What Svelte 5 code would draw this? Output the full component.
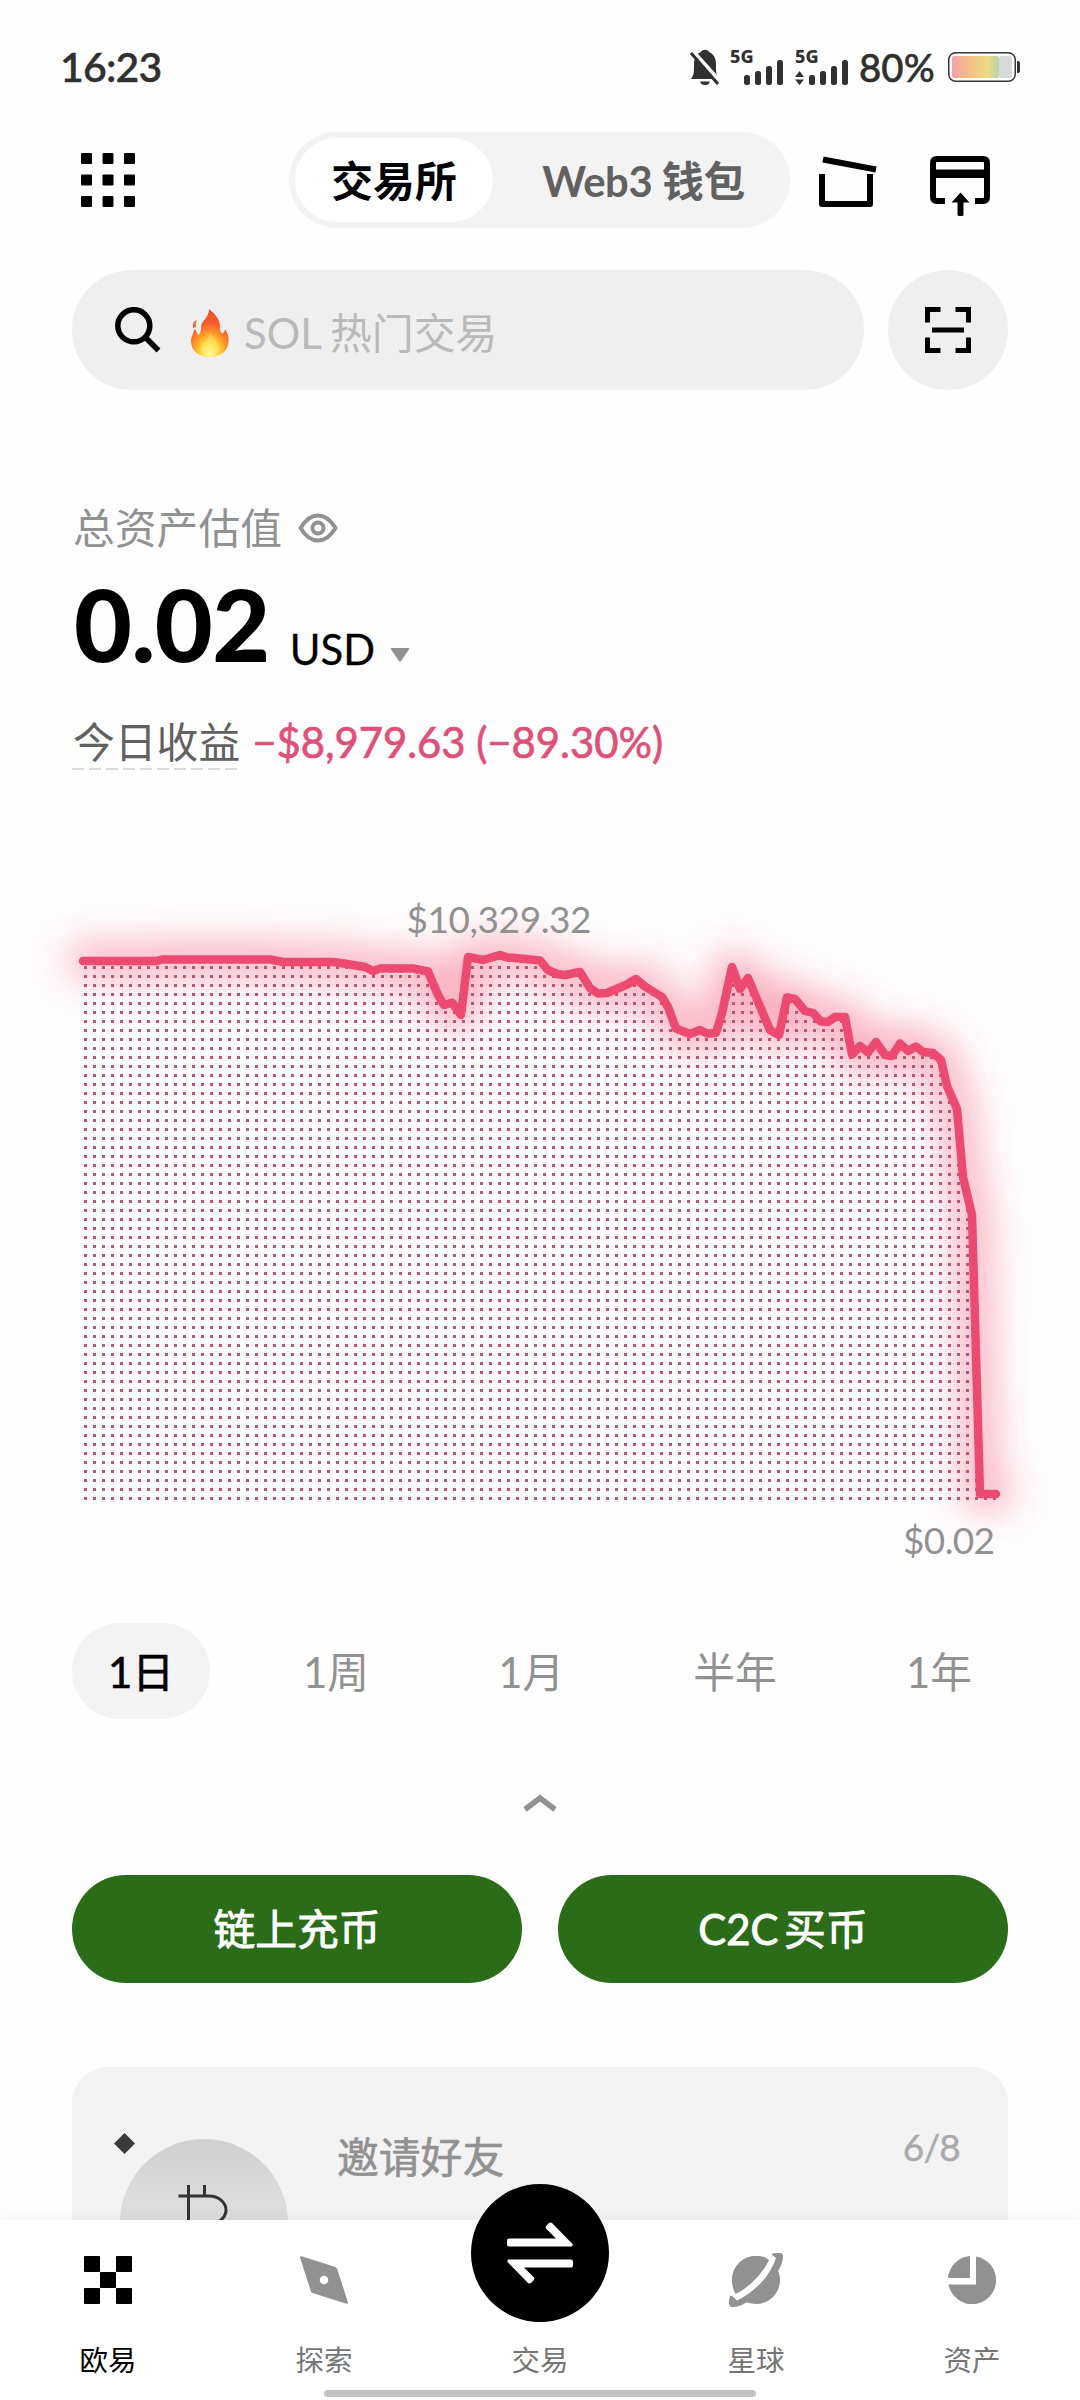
<script>
  const ranges = ['1日', '1周', '1月', '半年', '1年'];
  let activeRange = $state('1日');

  // Balance curve, in the chart's own coordinates
  const points = [
    [83, 81], [157, 81], [162, 79.5], [270, 79.5], [283, 82], [333, 82], [347, 84], [365, 87],
    [373, 91], [380, 88.5], [413, 88.5], [428, 91.5], [438, 115], [444, 125], [452, 122.5],
    [461, 135], [468, 77], [483, 80], [500, 75], [507, 77.5], [515, 78], [540, 80.5], [548, 90], [557, 94],
    [565, 95], [580, 92], [590, 108], [598, 113.5], [607, 113], [627, 104.5], [636, 99],
    [645, 106.5], [662, 117], [668, 127], [676, 148.5], [690, 154], [700, 150], [707, 153.5],
    [716, 153], [722, 133], [732, 87], [740, 109], [748, 98], [770, 150], [779, 155], [787, 117.5],
    [795, 119], [805, 131], [813, 133], [821, 141.5], [828, 142], [835, 137], [845, 137],
    [852, 174.5], [860, 166], [868, 172.5], [876, 162], [885, 175], [892, 176], [900, 163.5],
    [908, 171], [916, 166.5], [923, 172], [933, 173], [941, 180], [947, 206], [957, 229],
    [963, 297], [972, 335], [980, 614], [996, 614]
  ];
  const line = 'M' + points.map((p) => p.join(' ')).join('L');
  const area = line + 'V621H83Z';
</script>

<div class="screen">
  <main>
    <div class="status">
      <span class="clock">16:23</span>
      <div class="indicators">
        <svg class="bell" width="32" height="38" viewBox="0 0 32 38">
          <path d="M2 31C5 27 5 24 5 17C5 8 9 5 12 4C13 1 19 1 20 4C24 6 27 9 27 16C27 24 27 27 30 31Z M11 33.5H21Q20 37 16 37Q12 37 11 33.5Z" fill="#303030" />
          <path d="M3 3L31 34" stroke="#fff" stroke-width="5" />
          <path d="M2 5L29 36" stroke="#303030" stroke-width="3" />
        </svg>
        <div class="cell">
          <span>5G</span>
          <svg width="54" height="36" viewBox="0 0 54 36" fill="#303030">
            <rect x="14" y="26" width="6" height="10" rx="2.5" /><rect x="25" y="22" width="6" height="14" rx="2.5" />
            <rect x="36" y="17" width="6" height="19" rx="2.5" /><rect x="47" y="11" width="6" height="25" rx="2.5" />
          </svg>
        </div>
        <div class="cell second">
          <span>5G</span>
          <svg width="54" height="36" viewBox="0 0 54 36" fill="#303030">
            <path d="M0 28L4.500 22L9 28ZM0 30.500H9L4.500 36Z" />
            <rect x="14" y="26" width="6" height="10" rx="2.5" /><rect x="25" y="22" width="6" height="14" rx="2.5" />
            <rect x="36" y="17" width="6" height="19" rx="2.5" /><rect x="47" y="11" width="6" height="25" rx="2.5" />
          </svg>
        </div>
        <span class="percent">80%</span>
        <svg width="72" height="30" viewBox="0 0 72 30">
          <defs>
            <linearGradient id="charge">
              <stop offset="0" stop-color="#f4a0aa" /><stop offset=".4" stop-color="#f2c283" />
              <stop offset=".75" stop-color="#f0d884" /><stop offset="1" stop-color="#b5d6ae" />
            </linearGradient>
          </defs>
          <rect x=".75" y=".75" width="66.500" height="28.500" rx="7" fill="#fff" stroke="#3c3636" stroke-width="1.5" />
          <rect x="4" y="4" width="47" height="22" rx="2" fill="url(#charge)" />
          <rect x="51" y="4" width="13" height="22" rx="2" fill="#d9d9d9" />
          <path d="M69 9H70Q72 9 72 11V19Q72 21 70 21H69Z" fill="#303030" />
        </svg>
      </div>
    </div>

    <header>
      <svg class="grid" width="54" height="54" viewBox="0 0 54 54">
        {#each [0, 21.5, 43] as y}
          {#each [0, 21.5, 43] as x}
            <rect {x} {y} width="11" height="11" rx="1" />
          {/each}
        {/each}
      </svg>
      <div class="switch">
        <button class="on">交易所</button>
        <button>Web3 钱包</button>
      </div>
      <svg class="box" width="60" height="54" viewBox="0 0 60 54" fill="none" stroke="#000" stroke-width="6">
        <path d="M4 5.500L57 15.500M3 20V50H51V20" stroke-linejoin="round" />
      </svg>
      <svg class="deposit" width="60" height="60" viewBox="0 0 60 60">
        <path d="M15 45H7Q3 45 3 41V7Q3 3 7 3H53Q57 3 57 7V41Q57 45 53 45H45" fill="none" stroke="#000" stroke-width="6" />
        <path d="M3 13.500H57V22H3ZM30.500 36.500L39.500 46.500H33.500V58.500Q33.500 60 32 60H29Q27.500 60 27.500 58.500V46.500H21.500Z" />
      </svg>
    </header>

    <div class="search-row">
      <div class="search">
        <svg width="46" height="46" viewBox="0 0 46 46" fill="none" stroke="#000" stroke-width="5.500">
          <circle cx="18.800" cy="18.800" r="16" /><path d="M30 30L43.500 43.500" />
        </svg>
        <svg class="fire" width="38" height="48" viewBox="0 0 38 48">
          <defs>
            <radialGradient id="flame" cx=".5" cy=".92" r=".85">
              <stop offset="0" stop-color="#fffb9a" /><stop offset=".28" stop-color="#ffd73a" />
              <stop offset=".5" stop-color="#ff9a2b" /><stop offset=".75" stop-color="#f95a2b" /><stop offset="1" stop-color="#f0512c" />
            </radialGradient>
          </defs>
          <path d="M18 0C24 5 29 10 29 18C29 21 29 23 31 24C33 24 34 22 34 20C37 24 38 29 37.500 33C37 42 29 48 19 48C8 48 0 42 0 32C0 27 3 25 3 20C5 21 6 23 7 26C9 26 10 22 10 18C10 12 18 9 18 0Z" fill="url(#flame)" />
          <path d="M2 19Q1 13 6 11Q4 15 5 18Z" fill="#f0603c" />
          <path d="M19 23C21 29 29 34 28 39C27 44 24 47 19 47C13 47 9 44 10 39C11 34 14 35 15 31C16 30 19 28 19 23Z" fill="#fff27a" opacity=".35" />
        </svg>
        <span>SOL 热门交易</span>
      </div>
      <div class="scan">
        <svg width="46" height="46" viewBox="0 0 46 46" fill="none" stroke="#000" stroke-width="5">
          <path d="M2.500 15.500V2.500H15.500M30.500 2.500H43.500V15.500M43.500 30.500V43.500H30.500M15.500 43.500H2.500V30.500M7 23H39" />
        </svg>
      </div>
    </div>

    <section class="assets">
      <div class="label">
        <span>总资产估值</span>
        <svg width="40" height="30" viewBox="0 0 40 30" fill="none" stroke="#919191" stroke-width="4">
          <path d="M2.500 15Q10 2.500 20 2.500T37.500 15Q30 27.500 20 27.500T2.500 15Z" stroke-linejoin="round" />
          <circle cx="20" cy="15" r="5.500" />
        </svg>
      </div>
      <div class="value">
        <strong>0.02</strong>
        <span>USD</span>
        <svg width="20" height="14" viewBox="0 0 20 14"><path d="M1.500 0H18.500Q20 0 19 1.500L11 13Q10 14 9 13L1 1.500Q0 0 1.500 0Z" fill="#919191" /></svg>
      </div>
      <div class="profit">
        <span class="today">今日收益</span>
        <span class="loss">−$8,979.63 (−89.30%)</span>
      </div>
    </section>

    <svg class="chart" width="1080" height="690" viewBox="0 0 1080 690">
      <defs>
        <pattern id="dots" x="84" y="86" width="9" height="9" patternUnits="userSpaceOnUse">
          <rect width="3" height="3" fill="#bb5576" />
        </pattern>
        <filter id="glow" x="0" y="0" width="1080" height="690" filterUnits="userSpaceOnUse">
          <feGaussianBlur stdDeviation="19" />
        </filter>
      </defs>
      <path d={line} fill="none" stroke="#f5496f" stroke-opacity=".48" stroke-width="32" stroke-linejoin="round" stroke-linecap="round" filter="url(#glow)" />
      <path d={area} fill="url(#dots)" />
      <path d={line} fill="none" stroke="#ec4a6f" stroke-width="8.500" stroke-linejoin="round" stroke-linecap="round" />
      <text x="499" y="53" text-anchor="middle" textLength="185">$10,329.32</text>
      <text x="995" y="674" text-anchor="end" textLength="92">$0.02</text>
    </svg>

    <div class="tabs">
      {#each ranges as r}
        <button class:active={r === activeRange} onclick={() => (activeRange = r)}>{r}</button>
      {/each}
    </div>

    <svg class="collapse" width="34" height="18" viewBox="0 0 34 18" fill="none" stroke="#919191" stroke-width="5.500">
      <path d="M2 15.500L17 4L32 15.500" />
    </svg>

    <div class="actions">
      <button>链上充币</button>
      <button>C2C 买币</button>
    </div>

    <div class="card">
      <svg width="174" height="180" viewBox="0 0 174 180">
        <defs>
          <linearGradient id="coin" x2="0" y2="1"><stop offset="0" stop-color="#cfcfcf" /><stop offset=".35" stop-color="#dcdcdc" /></linearGradient>
        </defs>
        <path d="M10.500 0L21 10.500L10.500 21L0 10.500Z" fill="#3a3a3a" />
        <circle cx="90" cy="90" r="84" fill="url(#coin)" />
        <path d="M64.500 63H95A17 14 0 0 1 95 91H74.500M74.500 52V100M90.500 52V63" fill="none" stroke="#333" stroke-width="3" />
      </svg>
      <span class="invite">邀请好友</span>
      <span class="page">6/8</span>
    </div>
  </main>

  <nav>
    <div class="item current">
      <svg width="48" height="48" viewBox="0 0 48 48">
        <rect width="16" height="16" rx="1" /><rect x="32" width="16" height="16" rx="1" /><rect x="16" y="16" width="16" height="16" rx="1" />
        <rect y="32" width="16" height="16" rx="1" /><rect x="32" y="32" width="16" height="16" rx="1" />
      </svg>
      <span>欧易</span>
    </div>
    <div class="item">
      <svg width="48" height="48" viewBox="0 0 48 48">
        <path d="M1.500 .3L35.500 11Q36.500 11.500 37 12.500L48 46.500Q48 48 46.500 47.700L12.500 37Q11.500 36.500 11 35.500L0 1.500Q0 0 1.500 .3Z" fill="#919191" />
        <circle cx="24" cy="24" r="4.300" fill="#fff" />
      </svg>
      <span>探索</span>
    </div>
    <div class="item trade">
      <div class="disc">
        <svg width="66" height="62" viewBox="0 0 66 62" fill="#fff">
          <path d="M2 16.500Q0 16.500 0 18.500V22.500Q0 24.500 2 24.500H64.500Q66 24 65.500 22L45.500 1.500Q43.500 -.5 41.500 1.500L39.500 3.500Q38 5.500 39.500 7L49 16.500ZM64 45.500Q66 45.500 66 43.500V39.500Q66 37.500 64 37.500H1.500Q0 38 .5 40L20.500 60.500Q22.500 62.500 24.500 60.500L26.500 58.500Q28 56.500 26.500 55L17 45.500Z" />
        </svg>
      </div>
      <span>交易</span>
    </div>
    <div class="item">
      <svg width="54" height="54" viewBox="0 0 54 54">
        <circle cx="27" cy="27" r="24" fill="#919191" />
        <path d="M43 1C48 -1 54 -1 54 3C54 8 52 14 48.500 19L40 12ZM1 43C-1 50 0 54 3 54C8 54 14 52 18 49L10 42Z" fill="#919191" />
        <path d="M42.500 1.500L47 5Q44 14 37 24Q24 40 8 47.500L2 42Q4 39 7 37Z" fill="#fff" />
        <path d="M6.500 41Q16 37 27 25.500Q36 16 40 7L35 4Q31 3 27 3A24 24 0 0 0 3 27Q3 34 6.500 41Z" fill="#919191" />
      </svg>
      <span>星球</span>
    </div>
    <div class="item">
      <svg width="48" height="48" viewBox="0 0 48 48" fill="#919191">
        <path d="M22 0V22H0A24 24 0 0 1 22 0ZM28 .5A24 24 0 1 1 .5 28.500H28Z" />
      </svg>
      <span>资产</span>
    </div>
    <div class="home"></div>
  </nav>
</div>

<style>
  :global(body) {
    margin: 0;
    background: #fff;
  }
  .screen {
    width: 1080px;
    height: 2400px;
    display: flex;
    flex-direction: column;
    overflow: hidden;
    background: #fefefe;
    color: #000;
    font-family: Lato, 'Noto Sans CJK SC', sans-serif;
    font-size: 41.800px;
  }
  svg {
    display: block;
    flex: none;
  }
  button {
    border: 0;
    padding: 0;
    margin: 0;
    background: none;
    font: inherit;
    color: inherit;
    white-space: nowrap;
  }
  main {
    height: 2220px;
    flex: none;
    overflow: hidden;
    display: flex;
    flex-direction: column;
  }
  main > * {
    flex: none;
  }
  .status {
    box-sizing: border-box;
    height: 132px;
    padding: 37px 60px 0;
    display: flex;
    justify-content: space-between;
    color: #303030;
  }
  .clock {
    line-height: 60px;
    font-weight: 600;
    font-size: 41px;
    letter-spacing: -0.800px;
    -webkit-text-stroke: 0.3px;
  }
  .indicators {
    display: flex;
    align-items: center;
    height: 60px;
  }
  .cell {
    display: grid;
    margin-left: 9px;
  }
  .cell.second {
    margin-left: 11px;
  }
  .cell > * {
    grid-area: 1 / 1;
  }
  .cell span {
    font: 800 18px/15px 'Noto Sans', sans-serif;
  }
  .percent {
    margin-left: 10px;
    width: 89px;
    font-size: 38.500px;
    line-height: 60px;
    font-weight: 500;
    -webkit-text-stroke: 0.5px;
  }
  header {
    height: 96px;
    display: flex;
    align-items: center;
    padding-left: 81px;
  }
  .switch {
    box-sizing: border-box;
    width: 501px;
    height: 96px;
    margin-left: 154px;
    padding: 6px;
    border-radius: 48px;
    background: #f3f3f3;
    display: flex;
    font-weight: 700;
    color: #616161;
    word-spacing: -7px;
  }
  .switch button {
    flex: 1;
    padding: 0 0 2px 10px;
    letter-spacing: -0.400px;
  }
  .switch .on {
    flex: none;
    width: 198px;
    padding-left: 0;
    border-radius: 42px;
    background: #fff;
    color: #000;
    letter-spacing: 0;
  }
  .box {
    margin: 1px 0 0 29px;
  }
  .deposit {
    margin: 12px 0 0 51px;
  }
  .search-row {
    display: flex;
    justify-content: space-between;
    margin: 42px 72px 0;
  }
  .search {
    box-sizing: border-box;
    width: 792px;
    height: 120px;
    padding-left: 43px;
    border-radius: 60px;
    background: #efefef;
    display: flex;
    align-items: center;
    color: #b9b9b9;
    word-spacing: -1px;
  }
  .search span {
    padding-top: 2px;
  }
  .fire {
    margin: 6px 15px 0 30px;
  }
  .scan {
    width: 120px;
    height: 120px;
    border-radius: 60px;
    background: #efefef;
    display: grid;
    place-items: center;
  }
  .assets {
    margin: 108px 72px 0;
    height: 382px;
  }
  .label {
    height: 60px;
    display: flex;
    align-items: center;
    gap: 16px;
    padding-left: 1px;
    color: #919191;
    line-height: 60px;
  }
  .value {
    height: 120px;
    margin-top: 5px;
    display: flex;
    align-items: baseline;
    line-height: 120px;
  }
  .value strong {
    font-size: 100px;
    font-weight: 900;
    letter-spacing: -0.500px;
    margin-left: 2px;
  }
  .value span {
    margin-left: 20px;
    transform: translateY(3px);
    -webkit-text-stroke: 0.3px;
  }
  .value svg {
    margin: 0 0 18px 15px;
  }
  .profit {
    display: flex;
    height: 60px;
    margin-top: 29px;
    line-height: 60px;
  }
  .today {
    padding-left: 1px;
    color: #616161;
    height: 58px;
    background: repeating-linear-gradient(90deg, #dadada 0 12px, transparent 12px 17px) 0 100% / 100% 2px no-repeat;
  }
  .loss {
    margin-left: 12px;
    color: #df5078;
    -webkit-text-stroke: 0.7px;
  }
  .chart {
    margin-bottom: 53px;
  }
  .chart text {
    font-size: 37px;
    fill: #919191;
  }
  .tabs {
    display: flex;
    justify-content: space-between;
    margin: 0 72px;
    height: 96px;
  }
  .tabs button {
    padding: 0 36px 2px;
    border-radius: 48px;
    color: #919191;
  }
  .tabs .active {
    background: #f3f3f3;
    color: #000;
    -webkit-text-stroke: 0.6px;
  }
  .collapse {
    margin: 75px auto 0;
  }
  .actions {
    display: flex;
    gap: 36px;
    margin: 63px 72px 0;
  }
  .actions button {
    flex: 1;
    height: 108px;
    padding-bottom: 4px;
    border-radius: 54px;
    background: #2a6c17;
    color: #fff;
    word-spacing: -5px;
    -webkit-text-stroke: 0.9px;
  }
  .card {
    box-sizing: border-box;
    height: 300px;
    margin: 84px 72px 0;
    padding: 66px 48px 0 42px;
    border-radius: 36px;
    background: #f3f3f3;
    display: flex;
    align-items: flex-start;
    color: #919191;
  }
  .invite {
    margin-left: 49px;
    line-height: 48px;
    -webkit-text-stroke: 0.6px;
  }
  .page {
    margin-left: auto;
    font-size: 37px;
    line-height: 28px;
    letter-spacing: -0.800px;
    color: #aaa;
    -webkit-text-stroke: 0.4px;
  }
  nav {
    position: relative;
    height: 180px;
    flex: none;
    background: #fff;
    box-shadow: 0 -2px 16px rgba(0, 0, 0, 0.045);
    display: grid;
    grid-template-columns: repeat(5, 1fr);
  }
  .item {
    height: 160px;
    display: flex;
    flex-direction: column;
    align-items: center;
    justify-content: flex-end;
    color: #757575;
    font-size: 28.500px;
    line-height: 40px;
  }
  .item > svg {
    margin: auto;
  }
  .item.current {
    color: #000;
  }
  .disc {
    width: 138px;
    height: 138px;
    margin-bottom: 18px;
    border-radius: 50%;
    background: #000;
    display: grid;
    place-items: center;
    flex: none;
  }
  .home {
    position: absolute;
    left: 324px;
    bottom: 3px;
    width: 432px;
    height: 7px;
    border-radius: 4px;
    background: #c1c1c1;
  }
</style>
